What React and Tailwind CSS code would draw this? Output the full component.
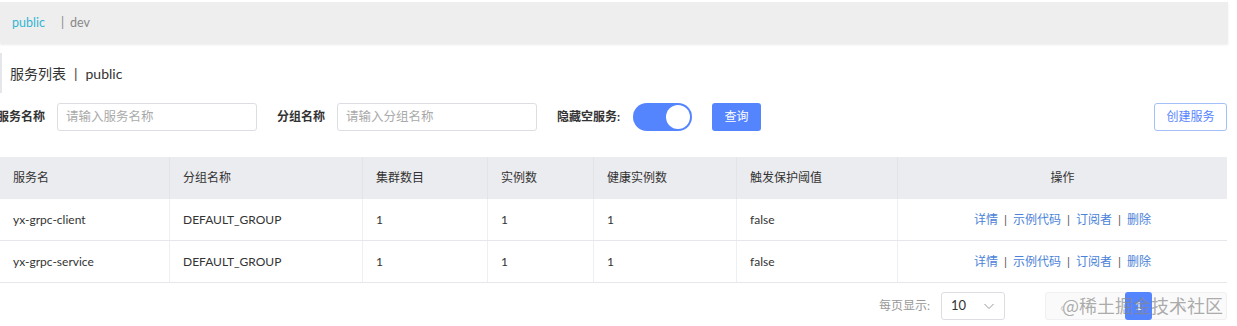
import React from 'react'

const FONT = { fontFamily: 'Lato, "Noto Sans CJK SC", sans-serif' }

const COLUMNS = [
  { key: 'name', label: '服务名', width: 'w-[170px]' },
  { key: 'group', label: '分组名称', width: 'w-[193px]' },
  { key: 'clusters', label: '集群数目', width: 'w-[125px]' },
  { key: 'instances', label: '实例数', width: 'w-[106px]' },
  { key: 'healthy', label: '健康实例数', width: 'w-[143px]' },
  { key: 'threshold', label: '触发保护阈值', width: 'w-[161px]' },
]

const ROWS = [
  { name: 'yx-grpc-client', group: 'DEFAULT_GROUP', clusters: 1, instances: 1, healthy: 1, threshold: 'false' },
  { name: 'yx-grpc-service', group: 'DEFAULT_GROUP', clusters: 1, instances: 1, healthy: 1, threshold: 'false' },
]

const ACTIONS = ['详情', '示例代码', '订阅者', '删除']

function Field({ label, placeholder }) {
  return (
    <div className="flex items-center">
      <span className="w-[48px] text-[12px] font-bold text-[#333] mr-[12px] whitespace-nowrap">{label}</span>
      <div className="w-[200px] h-[28px] border border-[#dcdee3] rounded-[3px] flex items-center px-[8px] text-[12.5px] text-[#aaa]">
        {placeholder}
      </div>
    </div>
  )
}

export default function App() {
  return (
    <div className="w-[1237px] h-[326px] bg-white overflow-hidden relative" style={FONT}>
      <div className="h-[2px]" />
      <div className="w-[1228px] h-[41px] bg-[#eeeeee] shadow-[0_2px_2px_rgba(0,0,0,0.08)] flex items-center pt-[2px] text-[12.5px]">
        <span className="ml-[12px] text-[#33b5d3]">public</span>
        <span className="ml-[16px] text-[#888]">|</span>
        <span className="ml-[6px] text-[#888]">dev</span>
      </div>

      <div className="mt-[10px] h-[40px] border-l-[2px] border-[#e5e6ea] flex items-center pl-[8px] text-[14px] text-[#333]">
        服务列表<span className="mx-[8px]">|</span>public
      </div>

      <div className="mt-[10px] h-[28px] flex items-center pr-[10px]">
        <div className="-ml-[3px]">
          <Field label="服务名称" placeholder="请输入服务名称" />
        </div>
        <div className="ml-[20px]">
          <Field label="分组名称" placeholder="请输入分组名称" />
        </div>
        <span className="ml-[20px] w-[66px] text-[12px] font-bold text-[#333] whitespace-nowrap">隐藏空服务:</span>
        <div className="ml-[10px] w-[59px] h-[28px] rounded-full bg-[#5584ff] relative">
          <div className="absolute right-[2px] top-[2px] w-[24px] h-[24px] rounded-full bg-white" />
        </div>
        <button className="ml-[20px] w-[49px] h-[28px] rounded-[3px] bg-[#5584ff] text-white text-[12px]">查询</button>
        <button className="ml-auto w-[73px] h-[28px] rounded-[3px] border border-[#a5bff8] text-[#5584ff] text-[12px]">创建服务</button>
      </div>

      <div className="mt-[26px] w-[1227px] text-[12px] text-[#333]">
        <div className="flex h-[42px] bg-[#ebecf0] items-center">
          {COLUMNS.map((c) => (
            <div key={c.key} className={`${c.width} h-full flex items-center px-[13px] border-r border-[#e3e4e8]`}>
              {c.label}
            </div>
          ))}
          <div className="flex-1 text-center">操作</div>
        </div>
        {ROWS.map((r) => (
          <div key={r.name} className="flex h-[42px] border-b border-[#e6e7eb]">
            {COLUMNS.map((c) => (
              <div key={c.key} className={`${c.width} h-full flex items-center px-[13px] border-r border-[#eeeff2]`}>
                {r[c.key]}
              </div>
            ))}
            <div className="flex-1 flex items-center justify-center text-[#4a82d8]">
              {ACTIONS.map((a, i) => (
                <span key={a}>
                  {i > 0 && <span className="mx-[6px] text-[#555]">|</span>}
                  {a}
                </span>
              ))}
            </div>
          </div>
        ))}
      </div>

      <div className="mt-[9px] w-[1227px] flex items-center justify-end h-[28px]">
        <span className="text-[12px] text-[#999] mr-[11px]">每页显示:</span>
        <div className="w-[64px] h-[28px] border border-[#dcdee3] rounded-[3px] flex items-center justify-between px-[9px] text-[13px] text-[#333]">
          10
          <svg width="12" height="12" viewBox="0 0 12 12" fill="none" stroke="#999" strokeWidth="1">
            <path d="M1.5 4l4.5 4.5 4.5-4.5" />
          </svg>
        </div>
        <div className="ml-[40px] w-[182px] h-[28px] border border-[#f0f0f2] rounded-[3px] bg-[#fafafa] flex items-center text-[#ccc] text-[14px]">
          <span className="ml-[14px]">‹</span>
          <div className="ml-[61px] w-[27px] h-[28px] rounded-[3px] bg-[#5584ff] text-white text-[12px] flex items-center justify-center">1</div>
          <span className="ml-[30px]">›</span>
        </div>
      </div>

      <div className="absolute left-[1062px] top-[292px] text-[18px] text-[#888]/70" style={{ fontFamily: '"Noto Sans CJK SC", sans-serif' }}>
        @稀土掘金技术社区
      </div>
    </div>
  )
}
